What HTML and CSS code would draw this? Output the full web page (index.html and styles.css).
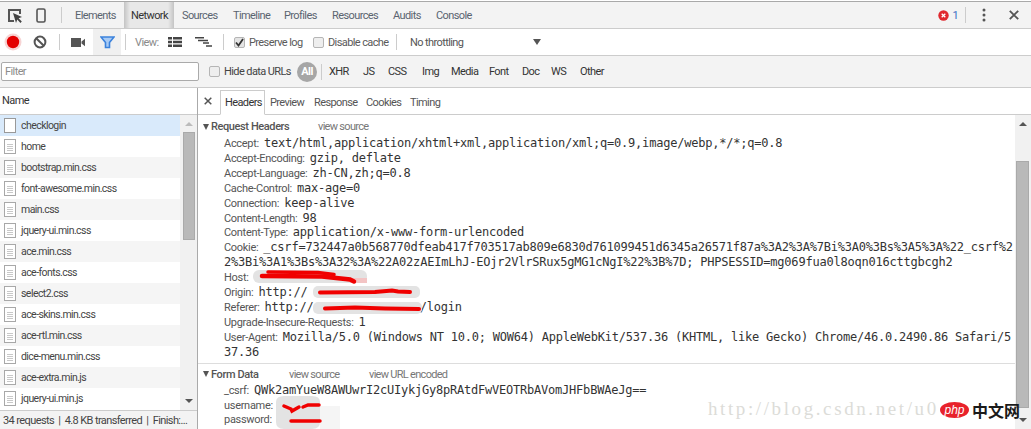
FILE: index.html
```html
<!DOCTYPE html>
<html lang="en">
<head>
<meta charset="utf-8">
<title>Network</title>
<link rel="stylesheet" href="styles.css">
</head>
<body>
<div class="app">
  <header class="bar bar-main">
    <svg class="ico ico-inspect" width="16" height="16" viewBox="0 0 16 16"><path d="M13 6V2H2v11h5" fill="none" stroke="#555" stroke-width="2"/><path d="M6 5l9 4-3.4 1.2 3.2 3.4-1.4 1.3-3.1-3.4L9 15z" fill="#444"/></svg>
    <svg class="ico ico-device" width="10" height="15" viewBox="0 0 10 15"><rect x="1" y="1" width="8" height="13" rx="1.5" fill="none" stroke="#555" stroke-width="1.6"/></svg>
    <span class="sep sep-main"></span>
    <nav class="tabs">
      <span class="tab tab-elements">Elements</span>
      <span class="tab tab-active">Network</span>
      <span class="tab tab-sources">Sources</span>
      <span class="tab tab-timeline">Timeline</span>
      <span class="tab tab-profiles">Profiles</span>
      <span class="tab tab-resources">Resources</span>
      <span class="tab tab-audits">Audits</span>
      <span class="tab tab-console">Console</span>
    </nav>
    <span class="errors">
      <svg width="11" height="11" viewBox="0 0 11 11"><circle cx="5.5" cy="5.5" r="5.2" fill="#e0292f"/><path d="M3.7 3.7l3.6 3.6M7.3 3.7l-3.6 3.6" stroke="#fff" stroke-width="1.3"/></svg>
      <span class="error-count">1</span>
    </span>
    <span class="sep sep-errors"></span>
    <svg class="ico ico-dots" width="4" height="14" viewBox="0 0 4 14"><circle cx="2" cy="2" r="1.5" fill="#555"/><circle cx="2" cy="7" r="1.5" fill="#555"/><circle cx="2" cy="12" r="1.5" fill="#555"/></svg>
    <svg class="ico ico-close" width="10" height="10" viewBox="0 0 10 10"><path d="M.8.8l8.4 8.4M9.2.8L.8 9.2" stroke="#555" stroke-width="1.9"/></svg>
  </header>

  <div class="bar bar-tools">
    <svg class="ico ico-record" width="18" height="18" viewBox="0 0 18 18"><circle cx="9" cy="9" r="8.5" fill="#f7d4d4"/><circle cx="9" cy="9" r="6.2" fill="#e30000"/></svg>
    <svg class="ico ico-clear" width="14" height="14" viewBox="0 0 14 14"><circle cx="7" cy="7" r="5.4" fill="none" stroke="#555" stroke-width="2"/><path d="M3.2 3.2l7.6 7.6" stroke="#555" stroke-width="2"/></svg>
    <span class="sep sep-a"></span>
    <svg class="ico ico-camera" width="14" height="9" viewBox="0 0 14 9"><path d="M0 0h10v9H0zM10.5 3.5L14 .8v7.4l-3.5-2.700z" fill="#555"/></svg>
    <span class="filter-btn">
      <svg width="15" height="13" viewBox="0 0 15 13"><path d="M1 1h13l-4.500 5.500V11.500H5.500V6.500z" fill="#a8cbf5" stroke="#3b82dc" stroke-width="1.600"/></svg>
    </span>
    <span class="sep sep-b"></span>
    <span class="view-label">View:</span>
    <svg class="ico ico-list" width="14" height="10" viewBox="0 0 14 10"><path d="M0 0h4v2.500H0zM5 0h9v2.500H5zM0 3.800h4v2.500H0zM5 3.800h9v2.500H5zM0 7.500h4V10H0zM5 7.500h9V10H5z" fill="#444"/></svg>
    <svg class="ico ico-waterfall" width="18" height="10" viewBox="0 0 18 10"><path d="M0 0h9v1.500H0zM3 2.800h10v1.500H3zM8 5.300h6v1.500H8zM11 8.200h6v1.500h-6z" fill="#444"/></svg>
    <span class="sep sep-c"></span>
    <label class="check check-preserve"><span class="box box-on"><svg width="9" height="9" viewBox="0 0 9 9"><path d="M1 4.500l2.500 3L8 1" fill="none" stroke="#333" stroke-width="1.800"/></svg></span>Preserve log</label>
    <label class="check check-cache"><span class="box"></span>Disable cache</label>
    <span class="sep sep-d"></span>
    <span class="throttle">No throttling</span>
    <span class="throttle-arrow"></span>
  </div>

  <div class="bar bar-filter">
    <span class="filter-input">Filter</span>
    <label class="check check-urls"><span class="box"></span>Hide data URLs</label>
    <span class="pill">All</span>
    <span class="sep sep-e"></span>
    <span class="type type-xhr">XHR</span>
    <span class="type type-js">JS</span>
    <span class="type type-css">CSS</span>
    <span class="type type-img">Img</span>
    <span class="type type-media">Media</span>
    <span class="type type-font">Font</span>
    <span class="type type-doc">Doc</span>
    <span class="type type-ws">WS</span>
    <span class="type">Other</span>
  </div>

  <main class="panes">
    <section class="left">
      <div class="name-head">Name</div>
      <div class="left-body">
        <ul class="files">
          <li class="file file-selected"><span class="doc doc-blank"></span>checklogin</li>
          <li class="file"><span class="doc"></span>home</li>
          <li class="file file-alt"><span class="doc"></span>bootstrap.min.css</li>
          <li class="file"><span class="doc"></span>font-awesome.min.css</li>
          <li class="file file-alt"><span class="doc"></span>main.css</li>
          <li class="file"><span class="doc"></span>jquery-ui.min.css</li>
          <li class="file file-alt"><span class="doc"></span>ace.min.css</li>
          <li class="file"><span class="doc"></span>ace-fonts.css</li>
          <li class="file file-alt"><span class="doc"></span>select2.css</li>
          <li class="file"><span class="doc"></span>ace-skins.min.css</li>
          <li class="file file-alt"><span class="doc"></span>ace-rtl.min.css</li>
          <li class="file"><span class="doc"></span>dice-menu.min.css</li>
          <li class="file file-alt"><span class="doc"></span>ace-extra.min.js</li>
          <li class="file"><span class="doc"></span>jquery-ui.min.js</li>
        </ul>
        <div class="scroll scroll-left">
          <span class="arrow-up"></span>
          <span class="thumb thumb-left"></span>
          <span class="arrow-down"></span>
        </div>
      </div>
      <div class="status">34 requests &nbsp;|&nbsp; 4.8 KB transferred &nbsp;|&nbsp; Finish:...</div>
    </section>

    <section class="right">
      <div class="detail-tabs">
        <svg class="ico ico-x" width="8" height="8" viewBox="0 0 8 8"><path d="M.7.7l6.600 6.600M7.300.7L.7 7.300" stroke="#555" stroke-width="1.500"/></svg>
        <span class="dtab dtab-active">Headers</span>
        <span class="dtab dtab-preview">Preview</span>
        <span class="dtab dtab-response">Response</span>
        <span class="dtab dtab-cookies">Cookies</span>
        <span class="dtab">Timing</span>
      </div>
      <div class="right-body">
        <div class="content">
          <div class="section-head"><span class="tri"></span><b class="section-title title-req">Request Headers</b><span class="link">view source</span></div>
          <div class="kv"><span class="k">Accept:</span><span class="v">text/html,application/xhtml+xml,application/xml;q=0.9,image/webp,*/*;q=0.8</span></div>
          <div class="kv"><span class="k">Accept-Encoding:</span><span class="v">gzip, deflate</span></div>
          <div class="kv"><span class="k">Accept-Language:</span><span class="v">zh-CN,zh;q=0.8</span></div>
          <div class="kv"><span class="k">Cache-Control:</span><span class="v">max-age=0</span></div>
          <div class="kv"><span class="k">Connection:</span><span class="v">keep-alive</span></div>
          <div class="kv"><span class="k">Content-Length:</span><span class="v">98</span></div>
          <div class="kv"><span class="k">Content-Type:</span><span class="v">application/x-www-form-urlencoded</span></div>
          <div class="kv"><span class="k">Cookie:</span><span class="v">_csrf=732447a0b568770dfeab417f703517ab809e6830d761099451d6345a26571f87a%3A2%3A%7Bi%3A0%3Bs%3A5%3A%22_csrf%22%3Bi%3A1%3Bs%3A32%3A%22A02zAEImLhJ-EOjr2VlrSRux5gMG1cNgI%22%3B%7D; PHPSESSID=mg069fua0l8oqn016cttgbcgh2</span></div>
          <div class="kv"><span class="k">Host:</span></div>
          <div class="kv"><span class="k">Origin:</span><span class="v">http://</span></div>
          <div class="kv"><span class="k">Referer:</span><span class="v">http://<span class="gap-url"></span>/login</span></div>
          <div class="kv"><span class="k">Upgrade-Insecure-Requests:</span><span class="v">1</span></div>
          <div class="kv"><span class="k">User-Agent:</span><span class="v">Mozilla/5.0 (Windows NT 10.0; WOW64) AppleWebKit/537.36 (KHTML, like Gecko) Chrome/46.0.2490.86 Safari/537.36</span></div>
          <div class="section-head section-form"><span class="tri"></span><b class="section-title title-form">Form Data</b><span class="link link-form1">view source</span><span class="link">view URL encoded</span></div>
          <div class="kv"><span class="k">_csrf:</span><span class="v">QWk2amYueW8AWUwrI2cUIykjGy8pRAtdFwVEOTRbAVomJHFbBWAeJg==</span></div>
          <div class="kv"><span class="k">username:</span></div>
          <div class="kv"><span class="k">password:</span></div>
        </div>
        <div class="scroll scroll-right">
          <span class="arrow-up"></span>
          <span class="thumb thumb-right"></span>
          <span class="arrow-down"></span>
        </div>
      </div>
    </section>
  </main>

  <svg class="scribble" width="1031" height="429" viewBox="0 0 1031 429">
    <g fill="#e3e3e3" stroke="none">
      <rect x="253" y="270" width="114" height="13" rx="6"/>
      <rect x="313" y="286" width="107" height="12" rx="5"/>
      <rect x="313" y="302" width="109" height="12" rx="5"/>
      <path d="M276 402q0-6 8-6h28q8 0 8 6v20q0 7-8 7h-28q-8 0-8-7z"/>
    </g>
    <rect x="320" y="406" width="20" height="23" fill="#f5f5f5"/>
    <path d="M340 278h27v5h-15z" fill="#f3c4c4"/>
    <g fill="none" stroke="#f00000" stroke-linecap="round">
      <path d="M268 272l50 .5 16 2" stroke-width="3.500"/>
      <path d="M262 276l60 .5 28 3 4 2" stroke-width="4.500"/>
      <path d="M320 292.500l55-.5 17-1.500 6 1 12 .5" stroke-width="4"/>
      <path d="M325 308.500l30-1 30 1 34 .5" stroke-width="4"/>
      <path d="M284 406l7 3 1 2 7-4" stroke-width="3.500"/>
      <path d="M303 407l5-2h11" stroke-width="3.500"/>
      <path d="M291 421l29 0" stroke-width="3.500"/>
    </g>
  </svg>

  <div class="watermark">http://blog.csdn.net/u0</div>
  <div class="php-logo">
    <span class="php-oval">php</span>
    <span class="php-cn">中文网</span>
  </div>
</div>
</body>
</html>
```
FILE: styles.css
```css
* { box-sizing: border-box; }
html, body { margin: 0; padding: 0; background: #fff; }
body { width: 1031px; height: 429px; overflow: hidden; }

.app {
  position: relative;
  width: 1031px;
  height: 429px;
  overflow: hidden;
  display: flex;
  flex-direction: column;
  font-family: Roboto, "Liberation Sans", sans-serif;
  font-size: 11px;
  letter-spacing: -0.6px;
  color: #444;
  white-space: nowrap;
}

.bar { display: flex; align-items: center; flex: none; }
.ico { flex: none; display: block; }
.sep { flex: none; width: 1px; height: 16px; background: #ccc; }

.bar-main {
  height: 28px;
  margin-top: 1px;
  border-top: 1px solid #a9a9a9;
  border-bottom: 1px solid #ccc;
  background: #f3f3f3;
  padding-left: 7px;
}
.ico-inspect { margin-top: 1px; }
.ico-device { margin-left: 13px; }
.sep-main { margin-left: 15px; }
.tabs { display: flex; align-items: stretch; height: 100%; margin-left: 13px; }
.tab { display: flex; align-items: center; color: #5a6470; }
.tab-elements { width: 49px; }
.tab-active {
  width: 50px;
  padding-left: 7px;
  color: #333;
  background: linear-gradient(90deg, #c4c4c4 0, #e8e8e8 12%, #e8e8e8 88%, #c4c4c4 100%);
}
.tab-sources { width: 51px; margin-left: 8px; }
.tab-timeline { width: 51px; }
.tab-profiles { width: 48px; }
.tab-resources { width: 61px; }
.tab-audits { width: 43px; }
.errors { display: flex; align-items: center; gap: 3px; margin-left: auto; }
.error-count { color: #3b6fc4; }
.sep-errors { margin-left: 7px; }
.ico-dots { margin-left: 16px; }
.ico-close { margin-left: 23px; margin-right: 12px; }

.bar-tools {
  height: 27px;
  border-bottom: 1px solid #ccc;
  background: #fff;
  padding-left: 4px;
}
.ico-clear { margin-left: 11px; }
.sep-a { margin-left: 12px; }
.ico-camera { margin-left: 11px; }
.filter-btn {
  flex: none;
  display: flex;
  align-items: center;
  justify-content: center;
  width: 28px;
  height: 26px;
  margin-left: 8px;
  background: #f0f0f0;
}
.sep-b { margin-left: 4px; }
.view-label { margin-left: 9px; color: #8a8a8a; width: 33px; }
.ico-waterfall { margin-left: 13px; }
.sep-c { margin-left: 10px; }
.check { display: flex; align-items: center; gap: 4px; color: #5a5a5a; }
.box {
  flex: none;
  display: flex;
  align-items: center;
  justify-content: center;
  width: 11px;
  height: 11px;
  border: 1px solid #b5b5b5;
  border-radius: 2px;
  background: #eee;
}
.box-on { background: #e4e4e4; }
.check-preserve { margin-left: 10px; width: 79px; }
.check-cache { width: 83px; }
.throttle { margin-left: 13px; width: 123px; color: #555; }
.throttle-arrow {
  flex: none;
  width: 0;
  height: 0;
  border-left: 4px solid transparent;
  border-right: 4px solid transparent;
  border-top: 6px solid #555;
}

.bar-filter {
  height: 32px;
  border-bottom: 1px solid #ccc;
  background: #f3f3f3;
  padding-left: 1px;
}
.filter-input {
  flex: none;
  width: 198px;
  height: 19px;
  padding: 2px 3px;
  border: 1px solid #aaa;
  border-radius: 2px;
  background: #fff;
  color: #8c8c8c;
  line-height: 14px;
}
.check-urls { margin-left: 10px; width: 88px; color: #444; }
.pill {
  flex: none;
  display: flex;
  align-items: center;
  justify-content: center;
  width: 20px;
  height: 20px;
  border-radius: 10px;
  background: #a6a6a6;
  color: #fff;
  font-weight: 700;
}
.sep-e { margin-left: 4px; }
.type { color: #333; }
.type-xhr { margin-left: 7px; width: 34px; }
.type-js { width: 25px; }
.type-css { width: 34px; }
.type-img { width: 29px; }
.type-media { width: 38px; }
.type-font { width: 33px; }
.type-doc { width: 29px; }
.type-ws { width: 29px; }

.panes { flex: 1; min-height: 0; display: flex; }
.left {
  flex: none;
  width: 198px;
  display: flex;
  flex-direction: column;
  border-right: 1px solid #aaa;
}
.name-head {
  flex: none;
  height: 27px;
  padding: 6px 2px 0;
  border-bottom: 1px solid #ccc;
  color: #333;
  line-height: 14px;
}
.left-body { flex: none; height: 295px; display: flex; }
.files { flex: none; width: 180px; margin: 0; padding: 0; list-style: none; }
.file {
  display: flex;
  align-items: center;
  height: 21px;
  padding-left: 4px;
  color: #444;
  font-size: 10.500px;
  letter-spacing: -0.55px;
}
.file-alt { background: #f5f5f5; }
.file-selected { background: #d9eafb; }
.doc {
  flex: none;
  width: 12px;
  height: 15px;
  margin-right: 5px;
  border: 1px solid #a8a8a8;
  background: #fff repeating-linear-gradient(#fff 0, #fff 1px, #c8c8c8 1px, #c8c8c8 2px) 2px 3px / 6px 8px no-repeat;
}
.doc-blank { background: #fff; border-color: #999; }

.scroll {
  flex: none;
  position: relative;
  display: flex;
  flex-direction: column;
  align-items: center;
  background: #f1f1f1;
}
.scroll-left { width: 17px; }
.scroll-right { width: 16px; }
.arrow-up, .arrow-down {
  position: absolute;
  width: 0;
  height: 0;
  border-left: 4px solid transparent;
  border-right: 4px solid transparent;
}
.arrow-up { border-bottom: 4px solid #555; top: 7px; }
.arrow-down { border-top: 4px solid #555; bottom: 7px; }
.scroll-left .arrow-up { border-bottom-color: #bbb; }
.thumb { position: absolute; background: #b9b9b9; border: 1px solid #aaa; }
.thumb-left { top: 17px; left: 3px; width: 12px; height: 108px; }
.thumb-right { top: 46px; left: 1px; width: 13px; height: 247px; }

.status {
  flex: 1;
  padding: 3px 0 0 3px;
  border-top: 1px solid #ccc;
  background: #f3f3f3;
  color: #444;
  line-height: 14px;
  overflow: hidden;
}

.right { flex: 1; min-width: 0; display: flex; flex-direction: column; }
.detail-tabs {
  flex: none;
  display: flex;
  align-items: flex-end;
  height: 27px;
  border-bottom: 1px solid #ccc;
  padding-left: 6px;
  color: #555;
}
.ico-x { align-self: center; margin-right: 8px; }
.dtab {
  display: flex;
  align-items: center;
  height: 24px;
  padding-left: 5px;
  color: #555;
}
.dtab-active {
  width: 45px;
  height: 25px;
  margin-bottom: -1px;
  border: 1px solid #ccc;
  border-bottom: 1px solid #fff;
  padding-left: 4px;
  background: #fff;
  color: #333;
}
.dtab-preview { width: 44px; }
.dtab-response { width: 52px; }
.dtab-cookies { width: 44px; }
.right-body { flex: 1; min-height: 0; display: flex; }
.content {
  flex: 1;
  min-width: 0;
  padding-top: 4px;
  overflow: hidden;
}
.section-head {
  display: flex;
  align-items: center;
  height: 15px;
  padding-left: 5px;
  margin-bottom: 3px;
}
.section-form {
  height: 21px;
  margin-top: 2px;
  margin-bottom: 0;
  padding-top: 1px;
  border-top: 1px solid #ddd;
}
.tri {
  flex: none;
  width: 0;
  height: 0;
  margin-right: 2px;
  border-left: 3.500px solid transparent;
  border-right: 3.500px solid transparent;
  border-top: 6px solid #555;
}
.section-title { font-weight: 500; color: #555; letter-spacing: -0.4px; }
.title-req { width: 107px; }
.title-form { width: 78px; }
.link { color: #777; letter-spacing: -0.7px; }
.link-form1 { width: 80px; }
.kv {
  padding-left: 26px;
  line-height: 14.900px;
  min-height: 14.900px;
  white-space: normal;
  word-break: break-all;
  color: #555;
  letter-spacing: -0.3px;
}
.k { margin-right: 5px; line-height: 1; }
.v {
  font-family: "DejaVu Sans Mono", "Liberation Mono", monospace;
  font-size: 12px;
  line-height: 1;
  letter-spacing: -0.22px;
  color: #333;
}
.gap-url { display: inline-block; width: 106px; height: 1px; }

.scribble { position: absolute; left: 0; top: 0; pointer-events: none; }
.watermark {
  position: absolute;
  left: 708px;
  top: 398px;
  font-family: "Liberation Serif", serif;
  font-size: 19px;
  letter-spacing: 2.600px;
  color: #dcdcd8;
}
.php-logo {
  position: absolute;
  left: 940px;
  top: 402px;
  display: flex;
  align-items: center;
  gap: 3px;
  letter-spacing: 0;
}
.php-oval {
  display: flex;
  align-items: center;
  justify-content: center;
  width: 29px;
  height: 16px;
  border-radius: 50%;
  background: #e8222b;
  color: #fff;
  font-family: "Liberation Sans", sans-serif;
  font-size: 12px;
  font-style: italic;
}
.php-cn {
  width: 50px;
  font-family: "Noto Sans CJK SC", sans-serif;
  font-size: 16px;
  line-height: 16px;
  font-weight: 700;
  color: #1a1a1a;
}
```
